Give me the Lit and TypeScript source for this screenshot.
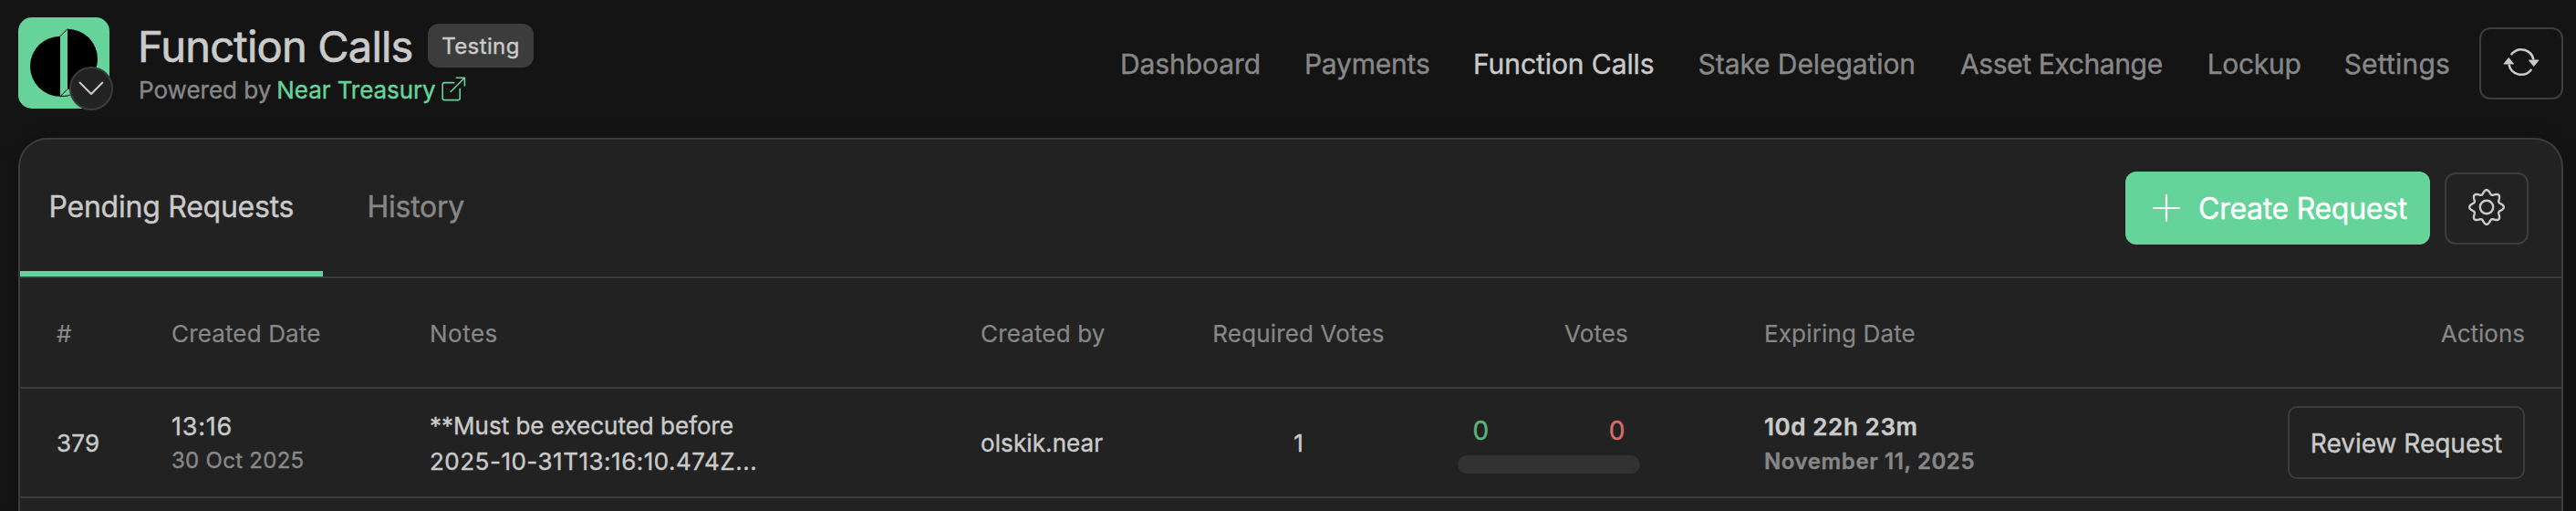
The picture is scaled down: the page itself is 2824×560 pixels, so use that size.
import { LitElement, html, css, svg } from "lit";
import { customElement } from "lit/decorators.js";
import { classMap } from "lit/directives/class-map.js";

const NAV = ["Dashboard", "Payments", "Function Calls", "Stake Delegation", "Asset Exchange", "Lockup", "Settings"];
const HEADERS = ["#", "Created Date", "Notes", "Created by", "Required Votes", "Votes", "Expiring Date", "Actions"];

/** Outline of an eight-lobed cog around the origin. */
const cogPath = (() => {
  const points: string[] = [];
  for (let i = 0; i < 240; i++) {
    const a = (i / 240) * Math.PI * 2;
    const r = 16.6 + 2.2 * Math.cos(8 * a);
    points.push(`${(r * Math.cos(a)).toFixed(2)} ${(r * Math.sin(a)).toFixed(2)}`);
  }
  return `M${points.join("L")}Z`;
})();

const logo = svg`<svg class="logo" width="100" height="100" viewBox="0 0 100 100">
  <rect width="100" height="100" rx="15" fill="#66d39b"/>
  <path d="M46 20.7A33 33 0 0 0 46 86.7Z"/>
  <path d="M54 12.7A33 33 0 0 1 54 78.7Z"/>
  <path d="M46 20.7 54 12.7M46 86.7 54 78.7C62 78 68 76 72 73M46 86.7Q55 87 62 83" fill="none" stroke="#000" stroke-width="1"/>
</svg>`;

const chevron = svg`<svg class="chevron" width="48" height="48" viewBox="0 0 48 48" fill="none">
  <circle cx="24" cy="24" r="23" fill="#222" stroke="#3c3c3c" stroke-width="2"/>
  <path d="M11.5 17.5 24 30 36.3 17.5" stroke="#cacaca" stroke-width="2" stroke-linecap="round" stroke-linejoin="round"/>
</svg>`;

const external = svg`<svg class="external" width="27" height="27" viewBox="0 0 27 27" fill="none" stroke="#66d39b" stroke-width="1.6" stroke-linecap="round" stroke-linejoin="round">
  <path d="M13.5 6.6H3A1.8 1.8 0 0 0 1.2 8.4V23.8A1.8 1.8 0 0 0 3 25.6H18.4A1.8 1.8 0 0 0 20.2 23.8V13.2"/>
  <path d="M10.2 16.5 25.4 1.3M16.4 1.3H25.4V10"/>
</svg>`;

const refresh = svg`<svg width="40" height="40" viewBox="0 0 16 16" fill="#cacaca">
  <path d="M11.534 7h3.932a.25.25 0 0 1 .192.41l-1.966 2.36a.25.25 0 0 1-.384 0l-1.966-2.36a.25.25 0 0 1 .192-.41zm-11 2h3.932a.25.25 0 0 0 .192-.41L2.692 6.23a.25.25 0 0 0-.384 0L.342 8.59A.25.25 0 0 0 .534 9z"/>
  <path d="M8 3c-1.552 0-2.94.707-3.857 1.818a.5.5 0 1 1-.771-.636A6.002 6.002 0 0 1 13.917 7H12.9A5.002 5.002 0 0 0 8 3zM3.1 9a5.002 5.002 0 0 0 8.757 2.182.5.5 0 1 1 .771.636A6.002 6.002 0 0 1 2.083 9H3.1z"/>
</svg>`;

const plus = svg`<svg width="30" height="30" viewBox="0 0 30 30" stroke="#fff" stroke-width="2.2" stroke-linecap="round"><path d="M15 1.2V28.8M1.2 15H28.8"/></svg>`;

const cog = svg`<svg class="cog" width="40" height="40" viewBox="-20 -20 40 40" fill="none" stroke="#cacaca" stroke-width="2.4" stroke-linejoin="round">
  <path d=${cogPath}/><circle r="7.2"/>
</svg>`;

@customElement("app-root")
export class AppRoot extends LitElement {
  static styles = css`
    :host { display: flex; flex-direction: column; height: 560px; overflow: hidden; background: #141414; color: #cacaca;
      font-family: Inter, "Liberation Sans", sans-serif; font-size: 26px; font-weight: 400; -webkit-text-stroke: .4px currentColor; }
    * { box-sizing: border-box; }
    svg { display: block; flex: none; }
    button { font: inherit; color: inherit; background: none; border: 2px solid #3c3c3c; border-radius: 12px; padding: 0;
      display: flex; align-items: center; justify-content: center; flex: none; }
    header { display: flex; height: 151px; flex: none; padding: 0 14px 0 20px; align-items: flex-start; white-space: nowrap; }
    .brand { position: relative; width: 100px; margin: 19px 31px 0 0; }
    .chevron { position: absolute; left: 56px; top: 54px; }
    .heading { flex: 1; padding-top: 20px; }
    .title-row { display: flex; align-items: center; height: 60px; }
    h1 { margin: 1px 18px 0 0; width: 300px; font-size: 47px; line-height: 60px; font-weight: 400; letter-spacing: -.8px; -webkit-text-stroke-width: .7px; }
    .pill { width: 116px; height: 48px; border-radius: 12px; background: #3c3c3c; text-align: center; font-size: 24px; line-height: 49px; letter-spacing: .4px; }
    .powered { display: flex; height: 38px; line-height: 38px; color: #878787; padding-left: 1px; }
    .powered a { color: #66d39b; margin-left: 6px; letter-spacing: -.08px; }
    .external { margin: 4px 0 0 6.5px; }
    nav { display: grid; grid-template-columns: 201.9px 185.1px 246.6px 287.3px 270.8px 150px auto; width: 1490px;
      font-size: 30px; line-height: 41px; padding-top: 50px; color: #878787; letter-spacing: -.08px; }
    nav .on { color: #cacaca; }
    nav a:nth-child(2) { letter-spacing: -.2px; }
    nav a:nth-child(5) { letter-spacing: -.38px; }
    nav a:nth-child(6) { letter-spacing: -.3px; }
    nav a:nth-child(7) { letter-spacing: .2px; }
    .refresh { width: 92px; height: 79px; margin-top: 30px; padding-bottom: 3px; }
    .card { flex: 1; display: flex; flex-direction: column; margin: 0 14px 0 20px; background: #222; border: 2px solid #3c3c3c; border-bottom: 0;
      border-radius: 32px 32px 0 0; box-shadow: 0 0 20px rgba(0, 0, 0, .2); }
    .bar { display: flex; height: 152px; flex: none; border-bottom: 2px solid #3c3c3c; }
    .tab { font-size: 32px; line-height: 147px; letter-spacing: -.24px; color: #878787; padding-left: 48.5px; }
    .tab.on { width: 332px; padding-left: 31.5px; color: #cacaca; border-bottom: 6px solid #66d39b; }
    .tools { display: flex; gap: 16px; margin: 35px 36px 0 auto; height: 80px; }
    .create { width: 334px; background: #66d39b; color: #fff; border: 0; font-size: 32px; letter-spacing: -.3px; gap: 20px; padding-left: 5px; }
    .settings { width: 92px; height: 79px; margin-top: 1px; padding-bottom: 3px; }
    .row { display: grid; grid-template-columns: 126px 282px 604px 224px 251px 384px 1fr auto; height: 121px; flex: none; align-items: center;
      padding: 0 40px; border-bottom: 2px solid #3c3c3c; white-space: nowrap; }
    .row + .row { height: 120px; }
    .row > :nth-child(3), .row > :nth-child(4), .row > :nth-child(7) { padding-left: 1px; }
    .head { color: #878787; letter-spacing: .15px; padding-top: 2px; -webkit-text-stroke-width: .2px; }
    .head :nth-child(3) { letter-spacing: .5px; }
    .head :nth-child(6) { text-align: right; padding-right: 148px; }
    .mid { text-align: center; }
    .head :nth-child(8) { letter-spacing: 0; }
    .num, .plain { letter-spacing: .3px; padding-top: 1px; }
    .plain { letter-spacing: .1px; }
    .when { padding-top: 3px; }
    .time { font-size: 27px; letter-spacing: .8px; line-height: 36px; }
    .date { font-size: 24px; letter-spacing: .28px; line-height: 37px; color: #878787; }
    .note { line-height: 39px; padding-top: 2px; }
    .stamp { letter-spacing: .5px; }
    .votes { width: 200px; margin-left: 49px; padding-top: 6px; }
    .tally { display: flex; justify-content: space-between; padding: 0 16.5px; font-size: 28px; line-height: 30px; margin-bottom: 12px; }
    .yes { color: #5fb37c; }
    .no { color: #d76b66; }
    .meter { height: 20px; border-radius: 10px; background: #323232; }
    .expiry { font-weight: 600; padding-top: 4px; }
    .left { letter-spacing: .6px; line-height: 38px; }
    .until { font-size: 24px; line-height: 38px; letter-spacing: .6px; color: #878787; }
    .review { width: 260px; height: 80px; border-radius: 10px; font-size: 28px; padding-top: 2px; }
  `;

  render() {
    return html`
      <header>
        <div class="brand">${logo}${chevron}</div>
        <div class="heading">
          <div class="title-row"><h1>Function Calls</h1><span class="pill">Testing</span></div>
          <div class="powered"><span>Powered by</span><a>Near Treasury</a>${external}</div>
        </div>
        <nav>${NAV.map((n, i) => html`<a class=${classMap({ on: i === 2 })}>${n}</a>`)}</nav>
        <button class="refresh">${refresh}</button>
      </header>
      <main class="card">
        <div class="bar">
          <div class="tab on">Pending Requests</div>
          <div class="tab">History</div>
          <div class="tools">
            <button class="create">${plus}<span>Create Request</span></button>
            <button class="settings">${cog}</button>
          </div>
        </div>
        <div class="row head">${HEADERS.map((h, i) => html`<div class=${classMap({ mid: i === 4 })}>${h}</div>`)}</div>
        <div class="row">
          <div class="num">379</div>
          <div class="when"><div class="time">13:16</div><div class="date">30 Oct 2025</div></div>
          <div class="note"><div>**Must be executed before</div><div class="stamp">2025-10-31T13:16:10.474Z...</div></div>
          <div class="plain">olskik.near</div>
          <div class="mid">1</div>
          <div class="votes">
            <div class="tally"><span class="yes">0</span><span class="no">0</span></div>
            <div class="meter"></div>
          </div>
          <div class="expiry"><div class="left">10d 22h 23m</div><div class="until">November 11, 2025</div></div>
          <button class="review">Review Request</button>
        </div>
      </main>`;
  }
}
